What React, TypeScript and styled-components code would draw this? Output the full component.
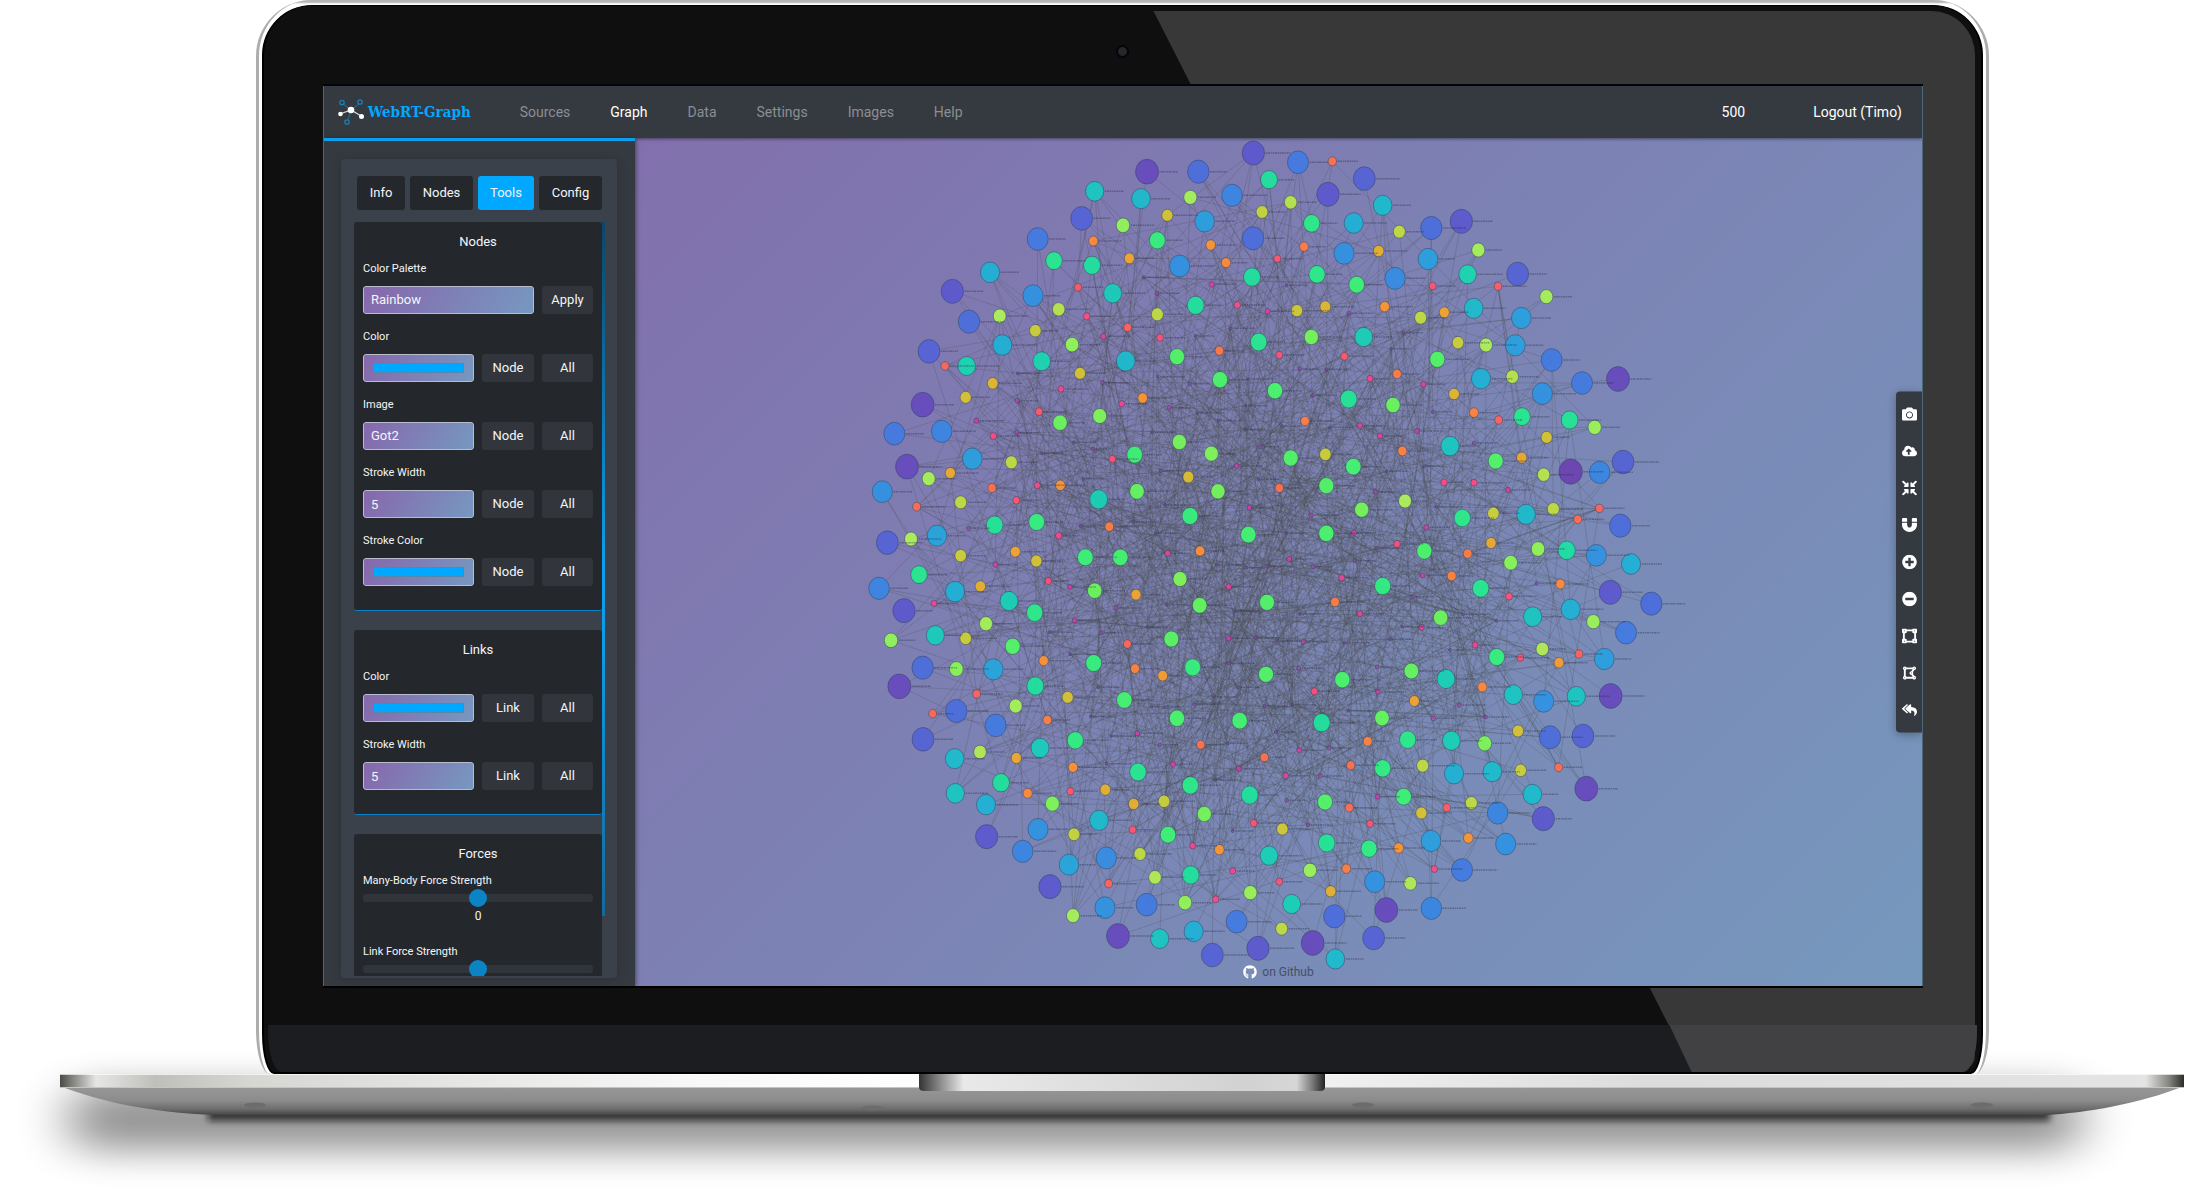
import React, { useId, useState } from "react";
import styled, { createGlobalStyle, css } from "styled-components";
import {
  FaCamera,
  FaCloudUploadAlt,
  FaCompressArrowsAlt,
  FaDrawPolygon,
  FaGithub,
  FaMagnet,
  FaMinusCircle,
  FaPlusCircle,
  FaReplyAll,
  FaVectorSquare,
} from "react-icons/fa";

const color = {
  blue: "#00a9ff",
  bar: "#353a40",
  card: "#3a414b",
  panel: "#24282d",
  button: "#32363c",
  text: "#f4f5f6",
  muted: "#8b8e92",
};

const fieldGradient = "linear-gradient(120deg, #8767ac, #7698c0)";

const GlobalStyle = createGlobalStyle`
  *, *::before, *::after { box-sizing: border-box; }
  body { margin: 0; background: #fff; }
  button, input, select { font: inherit; color: inherit; }
`;

/* ---------- device ---------- */

const Page = styled.div`
  display: flex;
  flex-direction: column;
  height: 100vh;
  min-height: 640px;
  overflow: hidden;
  font-family: Roboto, "Liberation Sans", sans-serif;
  font-size: 14px;
  line-height: 20px;
  color: ${color.text};
`;

const Lid = styled.div`
  position: relative;
  z-index: 1;
  flex: 1;
  min-height: 0;
  display: flex;
  flex-direction: column;
  margin: 0 196px 0 256px;
  padding: 5px 3px 0;
  background: linear-gradient(#b4b4b4 0 2px, #fff 4px);
  border: solid #adadad;
  border-width: 0 3px;
  border-radius: 56px 56px 14px 14px / 56px 56px 44px 44px;
`;

const Bezel = styled.div`
  position: relative;
  flex: 1;
  min-height: 0;
  display: flex;
  flex-direction: column;
  background: #0f0f0f;
  border: 1px solid #000;
  border-width: 1px 2px 2px;
  border-radius: 50px 50px 12px 12px / 50px 50px 40px 40px;
  overflow: hidden;
`;

const Glare = styled.div`
  position: absolute;
  inset: 5px 6px 2px 3px;
  border-radius: 3px 44px 14px 3px;
  background: #383838;
  clip-path: polygon(51.9% 0, 100% 0, 100% 100%, 83.4% 100%);
`;

const CameraRow = styled.div`
  position: relative;
  height: 80px;
  display: flex;
  justify-content: center;
  align-items: center;
  padding-top: 10px;
`;

const Lens = styled.span`
  width: 13px;
  height: 13px;
  border-radius: 50%;
  border: 2px solid #04040c;
  background: radial-gradient(#29291f 30%, #20204c);
`;

const Chin = styled.div`
  position: relative;
  height: 47px;
  margin: 39px 4px 0 4px;
  border-radius: 0 0 14px 14px / 0 0 40px 40px;
  background: #1c1d21;
  overflow: hidden;
`;

const ChinGlare = styled.div`
  position: absolute;
  inset: 0;
  background: #414143;
  clip-path: polygon(82% 0, 100% 0, 100% 100%, 83.3% 100%);
`;

const BaseArt = styled.svg`
  display: block;
  flex: none;
  width: 100%;
  height: 123px;
  overflow: visible;
`;

/* ---------- application ---------- */

const Screen = styled.div`
  position: relative;
  flex: 1;
  min-height: 0;
  display: flex;
  flex-direction: column;
  margin: 0 58px 0 59px;
  border: solid #4b6878;
  border-width: 0 1px;
  box-shadow: 0 2px 0 #000, 0 -2px 0 #02040c;
  background: linear-gradient(135deg, #8469aa, #7698bd);
  overflow: hidden;
`;

const Header = styled.header`
  display: flex;
  align-items: center;
  height: 52px;
  flex: none;
  padding: 0 20px 0 14px;
  background: ${color.bar};
  box-shadow: 0 1px 3px rgba(30, 34, 40, 0.6);
`;

const Brand = styled.a`
  display: flex;
  align-items: center;
  gap: 4px;
  margin-right: 49px;
  color: ${color.blue};
  font-family: "DejaVu Serif Condensed", "DejaVu Serif", serif;
  font-size: 15px;
  font-weight: 700;
  text-decoration: none;
  white-space: nowrap;
`;

const Nav = styled.nav`
  display: flex;
  gap: 40px;
  flex: 1;
`;

const NavLink = styled.a<{ $active?: boolean }>`
  color: ${(p) => (p.$active ? "#fff" : color.muted)};
  text-decoration: none;
`;

const Account = styled.div`
  display: flex;
  gap: 68px;
  white-space: nowrap;
`;

const Body = styled.div`
  flex: 1;
  min-height: 0;
  display: flex;
`;

const Sidebar = styled.aside`
  width: 311px;
  flex: none;
  display: flex;
  padding: 18px 18px 8px 17px;
  background: ${color.bar};
  border-top: 3px solid #0c9fee;
  box-shadow: 1px 0 4px rgba(30, 34, 40, 0.6);
  z-index: 1;
`;

const Card = styled.div`
  flex: 1;
  min-width: 0;
  display: flex;
  flex-direction: column;
  padding: 17px 12px 2px 13px;
  background: ${color.card};
  border-radius: 4px;
  box-shadow: 0 1px 8px rgba(30, 34, 40, 0.35);
`;

const Tabs = styled.div`
  display: flex;
  justify-content: center;
  gap: 5px;
  margin-bottom: 12px;
`;

const Tab = styled.button<{ $active?: boolean; $wide?: boolean }>`
  width: ${(p) => (p.$active ? 56 : p.$wide ? 63 : 48)}px;
  height: 34px;
  padding: 0;
  border: 0;
  border-radius: 3px;
  background: ${(p) => (p.$active ? color.blue : color.panel)};
  font-size: 13px;
`;

const ScrollArea = styled.div`
  flex: 1;
  min-height: 0;
  display: flex;
  overflow: hidden;
`;

const PanelList = styled.div`
  flex: 1;
  min-width: 0;
  display: flex;
  flex-direction: column;
  gap: 19px;
`;

const ScrollThumb = styled.div`
  width: 3px;
  height: 92%;
  background: linear-gradient(#0b4668, #0c9ff0 50%, #0d9ae6 62%, #14699b);
`;

const Panel = styled.section`
  flex: none;
  padding: 8px 9px 10px;
  background: ${color.panel};
  border-bottom: 1px solid #0a81c6;
  border-radius: 3px;
`;

const PanelTitle = styled.h2`
  margin: 0 0 6px;
  font-size: 13px;
  font-weight: 400;
  line-height: 24px;
  text-align: center;
`;

const Label = styled.label`
  display: block;
  font-size: 11px;
  line-height: 18px;
`;

const FieldRow = styled.div<{ $single?: boolean }>`
  display: grid;
  grid-template-columns: ${(p) => (p.$single ? "1fr 51px" : "1fr 52px 51px")};
  gap: 8px;
  margin: 8px 0 14px;
`;

const field = css`
  min-width: 0;
  width: 100%;
  height: 28px;
  padding: 0 7px;
  border: 1px solid #b9bccb;
  border-radius: 3px;
  background: ${fieldGradient};
  font-size: 13px;
  outline: 0;
`;

const Select = styled.select`
  ${field}
  appearance: none;
`;

const TextInput = styled.input`
  ${field}
`;

const ColorInput = styled.input`
  ${field}
  padding: 8px 9px;
  appearance: none;
  &::-webkit-color-swatch-wrapper { padding: 0; }
  &::-webkit-color-swatch { border: 1px solid #5686ac; border-radius: 0; }
`;

const ActionButton = styled.button`
  height: 28px;
  padding: 0;
  border: 0;
  border-radius: 3px;
  background: ${color.button};
  font-size: 13px;
`;

const Range = styled.input`
  display: block;
  width: 100%;
  height: 16px;
  margin: 0;
  appearance: none;
  background: transparent;
  &::-webkit-slider-runnable-track {
    height: 8px;
    border-radius: 3px;
    background: #30343b;
  }
  &::-webkit-slider-thumb {
    appearance: none;
    width: 18px;
    height: 18px;
    margin-top: -5px;
    border-radius: 50%;
    background: #0a84c5;
  }
`;

const RangeValue = styled.output`
  display: block;
  margin-bottom: 17px;
  font-size: 12px;
  text-align: center;
`;

const GraphArea = styled.main`
  position: relative;
  flex: 1;
  min-width: 0;
`;

const GraphSvg = styled.svg`
  display: block;
  width: 100%;
  height: 100%;
`;

const Toolbar = styled.div`
  position: absolute;
  right: 0;
  top: 50%;
  transform: translateY(-50%);
  display: flex;
  flex-direction: column;
  padding: 4px 0;
  border-radius: 4px 0 0 4px;
  background: ${color.bar};
  box-shadow: 0 2px 8px rgba(30, 34, 40, 0.4);
`;

const ToolButton = styled.button`
  display: grid;
  place-items: center;
  width: 26px;
  height: 37px;
  padding: 0;
  border: 0;
  background: none;
  color: #fff;
  font-size: 15px;
`;

const GithubLink = styled.a`
  position: absolute;
  left: 0;
  right: 0;
  bottom: 4px;
  margin: 0 auto;
  width: max-content;
  display: flex;
  align-items: center;
  gap: 5px;
  font-size: 12px;
  color: #465064;
  text-decoration: none;
  svg { color: #fff; font-size: 14px; }
`;

/* ---------- graph data ---------- */

// Each tile lists nodes as "x,y,weight" in thirds of a pixel from the tile's origin.
const tiles = [
  {
    ox: 860,
    oy: 130,
    data:
      "861,125,97 1015,125,90 1180,69,94 1227,149,69 704,184,75 843,206,77 991,202,51 1116,196,86 1206,246,45 665,265,92 789,286,53 922,256,42 1034,274,82 1179,325,90 533,327,88 700,333,33 892,331,64 1052,345,35 1098,398,33 1252,386,23 582,392,67 696,406,69 808,385,37 959,408,84 1176,441,69 390,427,79 277,484,94 654,472,24 758,490,74 851,442,3 1055,463,14 891,490,8 519,497,84 327,575,90 419,558,50 596,538,48 680,559,21 892,553,46 1007,526,69 1132,525,20 1223,544,14 526,602,44 803,592,26 730,619,15 900,623,22 1006,618,2 1111,595,4 207,664,92 427,645,79 636,644,53 320,708,72 255,708,27 545,694,72 797,693,77 951,680,60 1078,662,30 1196,636,67 1258,675,22 473,730,3 660,730,42 893,740,2 727,758,8 989,761,6 1164,747,2 1080,749,61 1245,782,61 398,760,40 603,777,18 317,802,42 472,812,11 848,804,35 785,821,17 928,833,9 188,824,97 537,845,24 719,858,55 600,878,57 349,872,12 400,918,20 471,908,10 245,904,86 103,911,88 641,937,2 699,957,7 545,970,2 958,936,56 1054,971,55 824,974,63 757,987,22 141,1010,97 337,986,82 454,997,46 1201,950,8 1130,1008,12 902,1022,5 670,1046,3 271,1029,38 206,1046,51 985,1041,41 396,1074,29 532,1066,19 601,1066,35 67,1085,84 302,1117,46 469,1111,23 716,1108,73 831,1084,58 1074,1084,56 1258,1074,29 170,1130,28 404,1185,68 530,1176,64 990,1158,64 1168,1133,12 748,1190,31 326,1195,8 662,1188,4 596,1217,19 82,1238,92 153,1227,50 231,1217,81 1165,1214,62 1157,827,2 1075,872,2 1155,898,2 1012,848,2 877,907,2 820,1175,2 915,1125,2 887,1210,2 1195,1048,2",
  },
  {
    ox: 1270,
    oy: 130,
    data:
      "84,97,88 187,94,29 283,146,92 174,193,94 62,217,48 338,226,77 125,280,66 251,279,79 388,305,46 484,294,90 574,274,94 102,350,31 222,370,84 326,363,39 474,387,82 625,360,51 141,433,66 260,464,63 375,445,85 488,468,23 593,433,72 684,469,25 743,432,92 829,500,51 50,466,3 81,542,43 166,530,40 344,530,35 452,563,46 523,547,37 611,535,77 754,564,82 237,550,7 124,621,56 281,621,73 401,608,3 364,656,2 564,638,44 648,645,50 736,646,82 223,679,24 502,688,60 845,690,88 936,759,88 1044,747,97 633,746,79 727,740,48 89,717,6 169,718,4 300,746,18 381,732,31 460,763,15 817,791,84 552,792,40 127,796,5 236,807,68 369,825,57 612,848,32 488,845,3 756,860,67 686,870,26 899,870,68 974,892,52 105,873,31 270,887,15 330,918,15 441,903,12 36,889,3 180,892,3 830,922,42 540,948,75 613,939,8 397,963,32 166,973,44 62,984,60 677,993,60 755,983,38 250,1010,62 463,1009,3 350,1024,2 902,1025,99 989,1027,86 1059,996,92 821,1034,48 522,1057,20 612,1058,20 714,1080,13 169,1067,60 316,1086,10 405,1113,50 275,1139,56 500,1130,3 123,1156,10 670,1150,44 577,1164,66 768,1153,77 850,1137,46 988,1135,26 923,1168,28 1051,1187,90 169,1210,61 252,1208,13 469,1192,13 663,1239,38 50,1210,2 381,1242,21 804,1257,53 890,1261,70 320,1255,4",
  },
  {
    ox: 860,
    oy: 550,
    data:
      "302,17,44 466,5,37 529,33,42 676,22,63 781,22,62 923,10,16 1020,3,34 406,44,13 177,74,67 57,115,86 285,125,79 361,109,39 565,93,21 630,111,12 704,122,57 828,134,37 960,87,55 1106,110,15 1069,45,2 1160,53,2 1224,49,5 222,160,17 132,182,94 447,153,73 524,188,66 768,174,9 644,211,12 1019,166,58 1221,157,60 920,164,4 1124,183,2 378,221,51 93,271,53 226,256,74 317,265,44 458,289,60 568,247,3 724,248,7 862,232,2 934,267,59 1106,265,12 1187,263,5 802,282,27 630,313,2 188,353,90 289,357,54 400,358,81 551,332,34 701,339,64 825,356,32 908,377,36 998,352,64 1106,340,5 1218,373,60 118,409,97 526,408,69 350,432,26 467,468,51 623,442,42 714,412,2 793,450,62 1134,412,3 1064,441,2 875,470,2 1002,463,5 1214,468,5 218,491,27 289,483,90 407,526,88 562,510,31 692,500,2 951,505,61 1139,512,62 189,568,92 540,594,74 646,571,65 832,550,12 753,558,2 899,584,6 1022,584,29 284,626,77 360,606,49 469,624,38 1103,580,3 1213,622,29 639,652,34 740,641,2 834,666,67 939,643,14 1136,656,12 991,706,66 1066,690,2 423,698,69 286,730,75 378,764,79 503,730,33 577,761,55 631,724,23 736,719,39 821,762,39 912,754,44 1169,735,69 1033,792,56 380,860,94 534,838,84 717,811,77 642,853,45 818,839,23 924,854,63 1181,819,22 1118,843,3 488,904,86 998,887,18 1078,899,35 627,944,81 739,924,85 840,912,46 1227,917,73 570,1010,94 992,975,69 885,982,49 746,1001,26 1118,963,18 1067,1048,20 1258,995,22 1171,1028,52 639,1097,51 735,1073,84 860,1064,88 975,1058,53 774,1158,97 899,1166,75 1001,1144,79 1130,1115,88 1057,1215,92 1194,1195,94",
  },
  {
    ox: 1270,
    oy: 550,
    data:
      "463,3,61 593,11,31 979,16,84 58,27,13 129,50,8 254,32,6 722,38,54 1083,42,79 215,83,17 458,76,12 545,78,32 338,108,65 632,115,67 717,139,22 871,102,33 1021,127,94 800,100,4 1144,161,90 430,140,7 195,156,31 270,191,16 580,193,3 512,203,57 902,178,79 788,200,75 970,215,52 1068,248,88 680,212,3 397,230,3 455,233,15 100,275,11 90,192,2 22,273,3 223,278,2 360,268,2 615,285,17 540,300,3 817,297,49 680,321,64 751,323,22 927,312,26 867,338,36 1003,327,82 86,355,9 321,351,8 424,363,58 217,389,61 528,387,73 637,411,33 133,424,21 324,426,12 433,453,37 730,434,75 821,454,84 919,439,75 1022,438,97 568,465,9 490,505,11 647,501,7 336,504,58 155,518,69 235,482,3 68,464,2 18,546,5 744,543,42 840,562,90 939,558,92 293,574,32 413,569,66 544,572,73 644,580,55 88,601,13 177,594,8 242,646,29 338,655,65 458,647,46 552,671,79 667,665,77 752,661,44 866,652,28 949,716,97 47,677,16 151,678,10 50,751,7 165,756,60 323,740,12 401,740,63 787,733,77 238,773,28 530,773,25 604,759,46 683,789,86 820,806,94 454,789,42 300,821,22 114,825,6 37,837,43 170,879,68 483,873,82 595,864,35 707,882,84 297,896,65 386,894,35 120,961,52 229,956,31 493,957,20 576,960,88 314,995,84 421,1000,49 182,1024,39 65,1062,73 484,1075,86 349,1080,97 193,1099,90 35,1136,46 128,1179,97 311,1164,92 196,1227,77",
  },
];

interface GraphNode {
  x: number;
  y: number;
  t: number;
  r: number;
}

const nodes: GraphNode[] = tiles.flatMap(({ ox, oy, data }) =>
  data.split(" ").map((entry) => {
    const [x, y, w] = entry.split(",").map(Number);
    return { x: ox + x / 3, y: oy + y / 3, t: w / 100, r: 1.1 + (10.7 * w) / 100 };
  })
);

// Cyclic cubehelix rainbow: small nodes start at purple and run through red, green and blue.
function rainbow(t: number): string {
  const d = Math.abs(t - 0.5);
  const h = ((360 * t - 100 + 120) * Math.PI) / 180;
  const l = 0.8 - 0.9 * d;
  const a = (1.5 - 1.5 * d) * l * (1 - l);
  const c = Math.cos(h);
  const s = Math.sin(h);
  const channel = (u: number, v: number) =>
    Math.round(255 * Math.max(0, Math.min(1, l + a * (u * c + v * s))));
  return `rgb(${channel(-0.14861, 1.78277)}, ${channel(-0.29227, -0.90649)}, ${channel(1.97294, 0)})`;
}

function makeRandom(seed: number) {
  let s = seed;
  return () => {
    s = (s * 1664525 + 1013904223) % 4294967296;
    return s / 4294967296;
  };
}

function buildLinks(count: number): string[] {
  const random = makeRandom(77);
  const parts: string[] = [];
  while (parts.length < count) {
    const a = nodes[Math.floor(random() * nodes.length)];
    const b = nodes[Math.floor(random() * nodes.length)];
    if (a === b || random() < (a.t + b.t) * 0.52) continue;
    parts.push(`M${a.x.toFixed(1)} ${a.y.toFixed(1)}L${b.x.toFixed(1)} ${b.y.toFixed(1)}`);
  }
  return parts;
}

// Links are spread over several translucent layers, so that crossings darken each other.
const links = buildLinks(1200);
const linkPaths = [0, 1, 2, 3, 4, 5].map((k) => links.filter((_, i) => i % 6 === k).join(""));

const labelRandom = makeRandom(9);
const labelPath = nodes
  .map((n) => `M${(n.x + n.r + 1).toFixed(1)} ${n.y.toFixed(1)}h${(16 + labelRandom() * 9).toFixed(1)}`)
  .join("");

function Graph() {
  return (
    <GraphSvg viewBox="635 138 1287 848" role="img" aria-label="Force-directed graph">
      {linkPaths.map((d, i) => (
        <path key={i} d={d} fill="none" stroke="#4d4f51" strokeWidth="1" opacity="0.25" />
      ))}
      {nodes.map((n, i) => (
        <ellipse
          key={i}
          cx={n.x}
          cy={n.y}
          rx={n.r}
          ry={n.r * 1.08}
          fill={rainbow(n.t)}
          fillOpacity={n.t < 0.12 ? 0.65 : 0.95}
          stroke="#33425c"
          strokeOpacity="0.7"
          strokeWidth="0.7"
        />
      ))}
      <path
        d={labelPath}
        fill="none"
        stroke="#23263a"
        strokeWidth="1.4"
        strokeDasharray="1.6 0.6 2.4 0.7 1.1 0.6"
        opacity="0.36"
      />
    </GraphSvg>
  );
}

/* ---------- parts ---------- */

function BrandIcon() {
  return (
    <svg width="26" height="26" viewBox="0 0 26 26" aria-hidden="true">
      <g stroke="#1b7fb4" strokeWidth="1.3" fill="none">
        <path d="M13 11L5 5M13 11L21 5M13 11L10 21" opacity="0.6" />
        <circle cx="4" cy="3.5" r="2.2" />
        <circle cx="22" cy="3" r="2.2" />
        <circle cx="9" cy="23" r="2.2" />
      </g>
      <path d="M2 15L13 11L24 17.500" stroke="#d8dadc" strokeWidth="1.2" fill="none" />
      <g fill="#fff">
        <circle cx="13" cy="11" r="3.300" />
        <circle cx="2.500" cy="15" r="2.300" />
        <circle cx="23.500" cy="17.500" r="2.500" />
      </g>
    </svg>
  );
}

type FieldKind = "select" | "color" | "text";

function Field(props: { label: string; kind: FieldKind; value: string; actions: string[] }) {
  const id = useId();
  const [value, setValue] = useState(props.value);
  return (
    <>
      <Label htmlFor={id}>{props.label}</Label>
      <FieldRow $single={props.actions.length === 1}>
        {props.kind === "select" && (
          <Select id={id} value={value} onChange={(e) => setValue(e.target.value)}>
            <option>{props.value}</option>
          </Select>
        )}
        {props.kind === "color" && (
          <ColorInput id={id} type="color" value={value} onChange={(e) => setValue(e.target.value)} />
        )}
        {props.kind === "text" && (
          <TextInput id={id} value={value} onChange={(e) => setValue(e.target.value)} />
        )}
        {props.actions.map((a) => (
          <ActionButton key={a} type="button">{a}</ActionButton>
        ))}
      </FieldRow>
    </>
  );
}

function ForceSlider({ label, readout }: { label: string; readout?: boolean }) {
  const id = useId();
  const [value, setValue] = useState("0");
  return (
    <>
      <Label htmlFor={id}>{label}</Label>
      <Range id={id} type="range" min="-100" max="100" value={value} onChange={(e) => setValue(e.target.value)} />
      {readout && <RangeValue htmlFor={id}>{value}</RangeValue>}
    </>
  );
}

function LaptopBase() {
  return (
    <BaseArt viewBox="0 1074 2185 123" preserveAspectRatio="none" aria-hidden="true">
      <defs>
        <linearGradient id="edge">
          <stop offset="0" stopColor="#4a4a46" />
          <stop offset="0.006" stopColor="#85857f" />
          <stop offset="0.017" stopColor="#e6e6e6" />
          <stop offset="0.045" stopColor="#bfbfba" />
          <stop offset="0.09" stopColor="#d6d6d3" />
          <stop offset="0.3" stopColor="#f8f8f8" />
          <stop offset="0.42" stopColor="#ffffff" />
          <stop offset="0.6" stopColor="#f0f0f0" />
          <stop offset="0.75" stopColor="#dcdcdc" />
          <stop offset="0.982" stopColor="#e4e4e4" />
          <stop offset="0.993" stopColor="#85857f" />
          <stop offset="1" stopColor="#2c2c28" />
        </linearGradient>
        <linearGradient id="belly" x1="0" y1="0" x2="0" y2="1">
          <stop offset="0" stopColor="#989898" />
          <stop offset="0.5" stopColor="#8c8c8c" />
          <stop offset="0.8" stopColor="#6c6c6c" />
          <stop offset="1" stopColor="#454545" />
        </linearGradient>
        <linearGradient id="notch">
          <stop offset="0" stopColor="#333" />
          <stop offset="0.04" stopColor="#777" />
          <stop offset="0.11" stopColor="#e9e9e9" />
          <stop offset="0.8" stopColor="#d2d2d2" />
          <stop offset="0.93" stopColor="#d6d6d6" />
          <stop offset="0.97" stopColor="#777" />
          <stop offset="1" stopColor="#222" />
        </linearGradient>
        <filter id="soft" x="-10%" y="-100%" width="120%" height="300%">
          <feGaussianBlur stdDeviation="26 18" />
        </filter>
        <filter id="tight" x="-5%" y="-200%" width="110%" height="500%">
          <feGaussianBlur stdDeviation="3 3" />
        </filter>
      </defs>
      <rect x="70" y="1088" width="2010" height="62" rx="20" fill="#000" opacity="0.42" filter="url(#soft)" />
      <rect x="208" y="1107" width="1842" height="14" fill="#111" opacity="0.7" filter="url(#tight)" />
      <path d="M60 1086H2184C2140 1104 2084 1113 2046 1115H230C160 1115 100 1102 60 1086Z" fill="url(#belly)" />
      <rect x="60" y="1074" width="2124" height="13" fill="url(#edge)" />
      <path d="M60 1074.500H2184" stroke="#fff" opacity="0.7" />
      <path d="M60 1087.500H2184" stroke="#c4c4c4" />
      <path d="M919 1074H1325V1087Q1325 1091 1320 1091H924Q919 1091 919 1087Z" fill="url(#notch)" />
      <g fill="#6c6c6c">
        <ellipse cx="255" cy="1105" rx="11" ry="2.500" />
        <ellipse cx="873" cy="1108" rx="11" ry="2.500" />
        <ellipse cx="1363" cy="1105" rx="11" ry="2.500" />
        <ellipse cx="1982" cy="1105" rx="11" ry="2.500" />
      </g>
    </BaseArt>
  );
}

const navItems = ["Sources", "Graph", "Data", "Settings", "Images", "Help"];
const tabs = ["Info", "Nodes", "Tools", "Config"];
const tools = [
  { name: "Screenshot", Icon: FaCamera },
  { name: "Upload", Icon: FaCloudUploadAlt },
  { name: "Compress", Icon: FaCompressArrowsAlt },
  { name: "Magnet", Icon: FaMagnet },
  { name: "Zoom in", Icon: FaPlusCircle },
  { name: "Zoom out", Icon: FaMinusCircle },
  { name: "Rectangle select", Icon: FaVectorSquare },
  { name: "Lasso select", Icon: FaDrawPolygon },
  { name: "Undo all", Icon: FaReplyAll },
];

export default function App() {
  return (
    <Page>
      <GlobalStyle />
      <Lid>
        <Bezel>
          <Glare />
          <CameraRow>
            <Lens />
          </CameraRow>
          <Screen>
            <Header>
              <Brand href="#">
                <BrandIcon />
                WebRT-Graph
              </Brand>
              <Nav>
                {navItems.map((item) => (
                  <NavLink key={item} href="#" $active={item === "Graph"}>{item}</NavLink>
                ))}
              </Nav>
              <Account>
                <NavLink href="#" $active>500</NavLink>
                <NavLink href="#" $active>Logout (Timo)</NavLink>
              </Account>
            </Header>
            <Body>
              <Sidebar>
                <Card>
                  <Tabs>
                    {tabs.map((t) => (
                      <Tab key={t} type="button" $active={t === "Tools"} $wide={t.length > 4}>{t}</Tab>
                    ))}
                  </Tabs>
                  <ScrollArea>
                    <PanelList>
                      <Panel>
                        <PanelTitle>Nodes</PanelTitle>
                        <Field label="Color Palette" kind="select" value="Rainbow" actions={["Apply"]} />
                        <Field label="Color" kind="color" value="#00a9ff" actions={["Node", "All"]} />
                        <Field label="Image" kind="select" value="Got2" actions={["Node", "All"]} />
                        <Field label="Stroke Width" kind="text" value="5" actions={["Node", "All"]} />
                        <Field label="Stroke Color" kind="color" value="#00a9ff" actions={["Node", "All"]} />
                      </Panel>
                      <Panel>
                        <PanelTitle>Links</PanelTitle>
                        <Field label="Color" kind="color" value="#00a9ff" actions={["Link", "All"]} />
                        <Field label="Stroke Width" kind="text" value="5" actions={["Link", "All"]} />
                      </Panel>
                      <Panel>
                        <PanelTitle>Forces</PanelTitle>
                        <ForceSlider label="Many-Body Force Strength" readout />
                        <ForceSlider label="Link Force Strength" />
                      </Panel>
                    </PanelList>
                    <ScrollThumb />
                  </ScrollArea>
                </Card>
              </Sidebar>
              <GraphArea>
                <Graph />
                <Toolbar>
                  {tools.map(({ name, Icon }) => (
                    <ToolButton key={name} type="button" aria-label={name}>
                      <Icon />
                    </ToolButton>
                  ))}
                </Toolbar>
                <GithubLink href="#">
                  <FaGithub />
                  on Github
                </GithubLink>
              </GraphArea>
            </Body>
          </Screen>
          <Chin>
            <ChinGlare />
          </Chin>
        </Bezel>
      </Lid>
      <LaptopBase />
    </Page>
  );
}
